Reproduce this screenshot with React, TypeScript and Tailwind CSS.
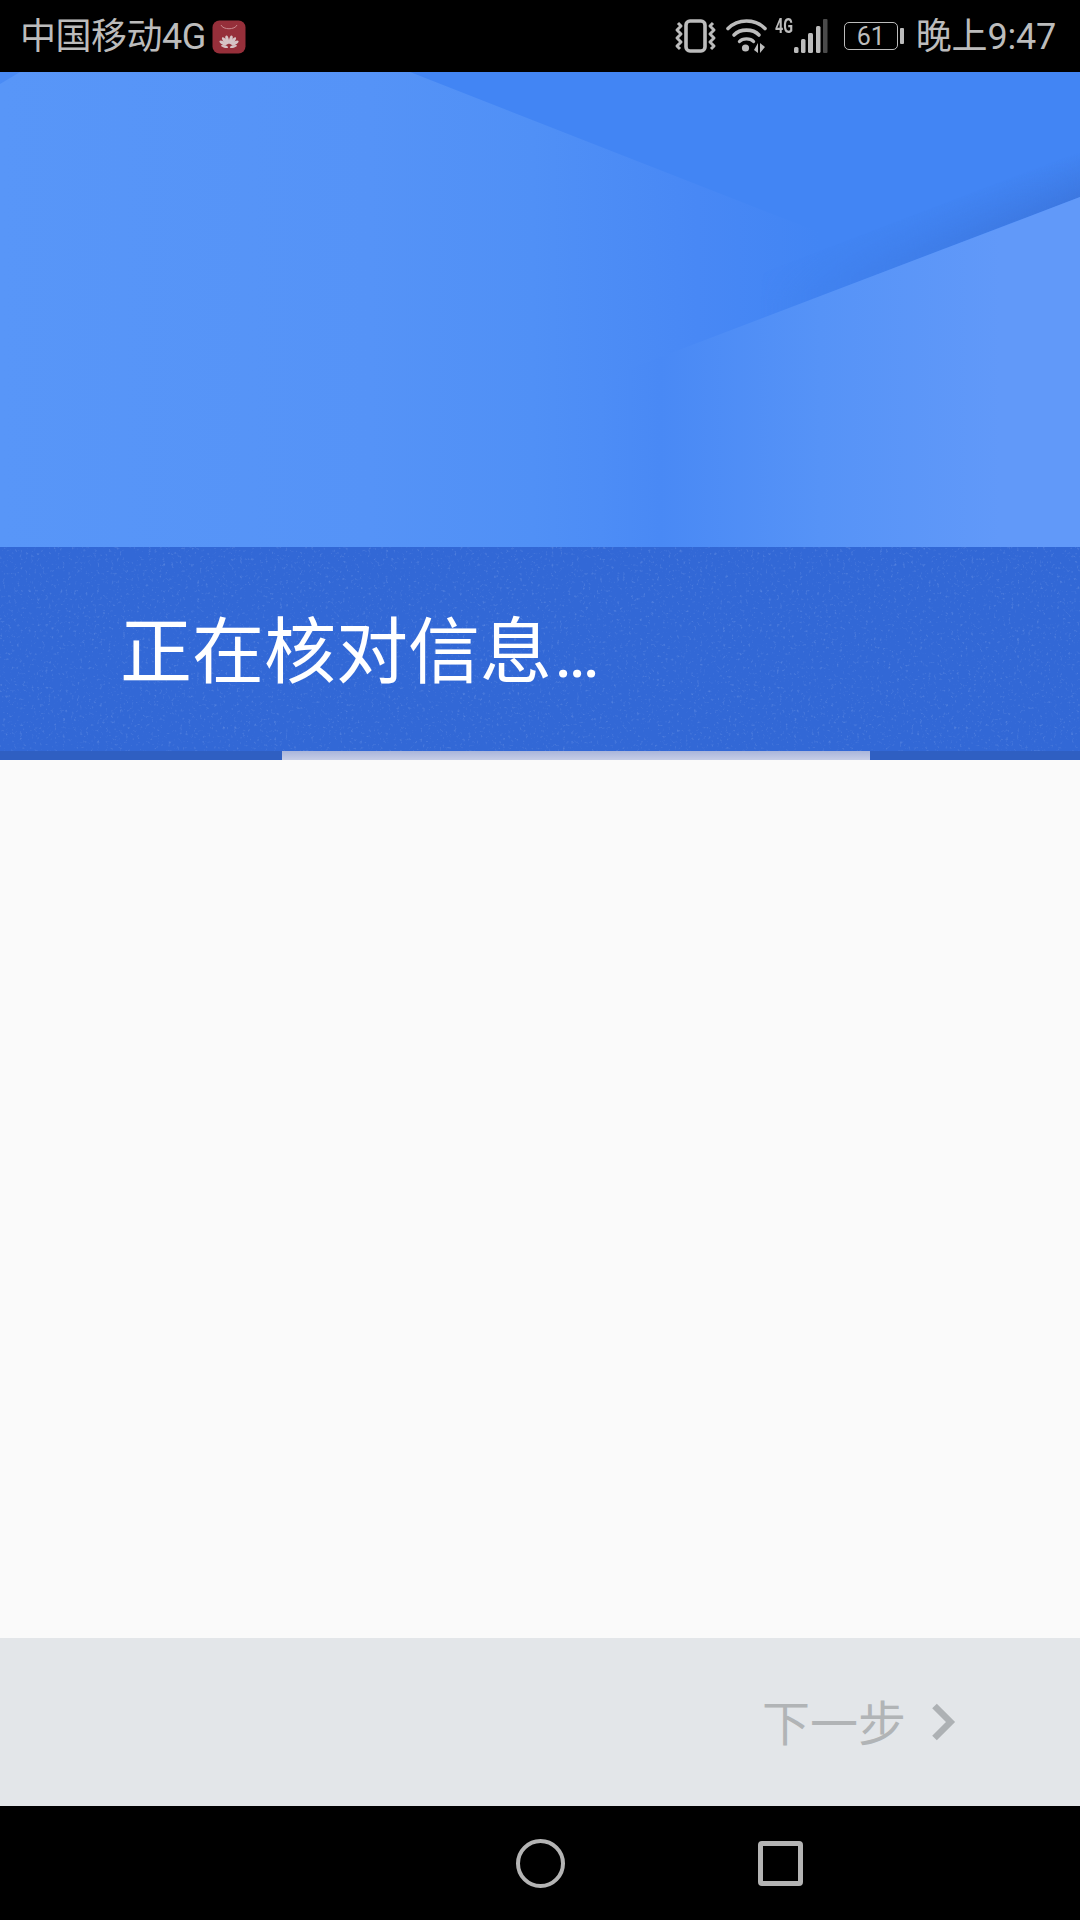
export default function App() {
  const grey = "#bcbcbc";
  return (
    <div className="flex h-[1920px] w-[1080px] flex-col overflow-hidden bg-[#fafafa] font-['Roboto','Noto_Sans_CJK_SC',sans-serif]">
      {/* status bar */}
      <div className="flex h-[72px] shrink-0 items-center bg-black pl-[20px] pr-[24px] text-[#bcbcbc]">
        <span className="relative top-[1px] text-[36px] leading-none font-normal tracking-[-0.5px]">中国移动4G</span>
        <svg className="ml-[6px] mt-[1px]" width="34" height="34" viewBox="0 0 34 34">
          <rect x="0.5" y="0.5" width="33" height="33" rx="7" fill="#962f3a" />
          <path d="M9 5c2 5 14 5 16 0" fill="none" stroke="#c98a90" strokeWidth="1" />
          <g fill="#d6c4c6">
            <ellipse cx="11" cy="23" rx="1.6" ry="4" transform="rotate(-60 11 23)" />
            <ellipse cx="12.8" cy="20.8" rx="1.7" ry="4.2" transform="rotate(-35 12.8 20.8)" />
            <ellipse cx="15.2" cy="19.8" rx="1.7" ry="4.4" transform="rotate(-12 15.2 19.8)" />
            <ellipse cx="18.8" cy="19.8" rx="1.7" ry="4.4" transform="rotate(12 18.8 19.8)" />
            <ellipse cx="21.2" cy="20.8" rx="1.7" ry="4.2" transform="rotate(35 21.2 20.8)" />
            <ellipse cx="23" cy="23" rx="1.6" ry="4" transform="rotate(60 23 23)" />
            <ellipse cx="12.5" cy="26.5" rx="3.6" ry="1.2" transform="rotate(15 12.5 26.5)" />
            <ellipse cx="21.5" cy="26.5" rx="3.6" ry="1.2" transform="rotate(-15 21.5 26.5)" />
          </g>
        </svg>
        <div className="ml-auto flex items-center">
          {/* vibrate */}
          <svg width="43" height="34" viewBox="0 0 43 34" fill="none" stroke={grey}>
            <rect x="12" y="2" width="19" height="30" rx="4" strokeWidth="3.6" />
            <path d="M4 4l3 3-4 4 4 4-4 4 4 4-4 4 3 3" strokeWidth="3" strokeLinejoin="round" />
            <path d="M39 4l-3 3 4 4-4 4 4 4-4 4 4 4-3 3" strokeWidth="3" strokeLinejoin="round" />
          </svg>
          {/* wifi */}
          <svg className="ml-[9px]" width="41" height="34" viewBox="0 0 41 34" fill="none" stroke={grey} strokeLinecap="round">
            <path d="M2 9.5C12-.5 29-.5 39 9.5" strokeWidth="3.6" />
            <path d="M8 16C14 9.5 27 9.5 33 16" strokeWidth="3.6" />
            <path d="M13.5 22.5C16.5 19 24.5 19 27.5 22.5" strokeWidth="3.4" />
            <circle cx="19.5" cy="29" r="3.6" fill={grey} stroke="none" />
            <path d="M28 31l4-7v10zM34 24v10l5-6z" fill={grey} stroke="none" />
          </svg>
          {/* signal */}
          <div className="relative ml-[8px] h-[34px] w-[53px]">
            <span className="absolute left-0 top-[-3px] origin-left scale-x-[0.72] text-[20px] leading-[20px] font-bold">4G</span>
            <svg className="absolute inset-0" width="53" height="34" viewBox="0 0 53 34">
              <rect x="19" y="28" width="4.5" height="6" rx="1.5" fill={grey} />
              <rect x="26" y="20" width="4.5" height="14" rx="1.5" fill={grey} />
              <rect x="33" y="14" width="5" height="20" rx="1.5" fill={grey} />
              <rect x="41" y="7" width="4.5" height="27" rx="1.5" fill={grey} />
              <rect x="48" y="0" width="4.5" height="34" rx="1" fill="#4a4a4a" />
            </svg>
          </div>
          {/* battery */}
          <div className="ml-[16px] flex items-center">
            <div className="flex h-[28px] w-[54px] items-center justify-center rounded-[5px] border-[1.5px] border-[#bcbcbc] text-[25px] leading-none font-normal">61</div>
            <div className="ml-[2px] h-[16px] w-[4px] rounded-[1px] bg-[#bcbcbc]" />
          </div>
          <span className="relative top-[1px] ml-[12px] text-[36px] leading-none font-normal tracking-[-0.2px]">晚上9:47</span>
        </div>
      </div>

      {/* header art */}
      <div className="h-[475px] shrink-0 bg-[#4285f4]">
        <svg width="1080" height="475" viewBox="0 0 1080 475" className="block">
          <defs>
            <linearGradient id="leftFill" gradientUnits="userSpaceOnUse" x1="0" y1="0" x2="820" y2="0">
              <stop offset="0" stopColor="#5896f8" />
              <stop offset="0.45" stopColor="#5593f7" />
              <stop offset="0.65" stopColor="#5090f6" />
              <stop offset="0.85" stopColor="#4888f5" />
              <stop offset="1" stopColor="#4285f4" />
            </linearGradient>
            <linearGradient id="rightFill" gradientUnits="userSpaceOnUse" x1="600" y1="0" x2="1000" y2="0">
              <stop offset="0" stopColor="#4d8df6" />
              <stop offset="0.15" stopColor="#4989f5" />
              <stop offset="0.55" stopColor="#5693f7" />
              <stop offset="1" stopColor="#6199f9" />
            </linearGradient>
            <linearGradient id="edgeShade" gradientUnits="userSpaceOnUse" x1="1080" y1="125" x2="1066" y2="85">
              <stop offset="0" stopColor="#3a72d8" stopOpacity="0.7" />
              <stop offset="1" stopColor="#3a72d8" stopOpacity="0" />
            </linearGradient>
            <linearGradient id="edgeFade" gradientUnits="userSpaceOnUse" x1="1080" y1="0" x2="760" y2="0">
              <stop offset="0" stopColor="white" />
              <stop offset="1" stopColor="black" />
            </linearGradient>
            <mask id="edgeMask" maskUnits="userSpaceOnUse" x="0" y="0" width="1080" height="475">
              <rect width="1080" height="475" fill="url(#edgeFade)" />
            </mask>
          </defs>
          <rect width="1080" height="475" fill="#4285f4" />
          <polygon points="0,0 410,0 780,145 820,160 820,475 0,475" fill="url(#leftFill)" />
          <polygon points="0,0 20,0 0,12" fill="#4a8bf5" />
          <g mask="url(#edgeMask)">
            <polygon points="1132,105 740,255 726,215 1118,65" fill="url(#edgeShade)" />
          </g>
          <polygon points="1080,125 600,308 600,475 1080,475" fill="url(#rightFill)" />
        </svg>
      </div>

      {/* title band */}
      <div className="relative flex h-[204px] shrink-0 items-center bg-[#3268d6] pl-[120px]">
        <svg className="absolute inset-0" width="1080" height="204">
          <filter id="speck">
            <feTurbulence type="fractalNoise" baseFrequency="0.35" numOctaves="2" seed="4" />
            <feColorMatrix values="0 0 0 0 0.55  0 0 0 0 0.68  0 0 0 0 0.95  0 0 0 2.4 -1.45" />
          </filter>
          <rect width="1080" height="204" filter="url(#speck)" opacity="0.3" />
        </svg>
        <h1 className="relative top-[4px] text-[72px] leading-none font-normal text-white">
          正在核对信息<span className="ml-[2px] tracking-[-5px]">...</span>
        </h1>
      </div>

      {/* progress strip */}
      <div className="h-[9px] shrink-0 bg-[#2f5fc2]">
        <div className="ml-[282px] h-full w-[588px] bg-gradient-to-b from-[#a9b5da] to-[#c6cde7]" />
      </div>

      {/* empty body */}
      <div className="flex-1 bg-[#fafafa]" />

      {/* footer */}
      <div className="flex h-[168px] shrink-0 items-center justify-end bg-[#e3e6e9] pr-[124px]">
        <span className="relative top-[3px] text-[48px] leading-none font-normal text-[#b1b4b6]">下一步</span>
        <svg className="ml-[26px]" width="24" height="38" viewBox="0 0 24 38" fill="none" stroke="#adb1b4" strokeWidth="6.5">
          <path d="M2.5 3l16 16-16 16" />
        </svg>
      </div>

      {/* navigation bar */}
      <div className="relative flex h-[114px] shrink-0 items-center bg-black pl-[516px]">
        <div className="h-[49px] w-[49px] rounded-full border-[4px] border-[#b4b4b4]" />
        <div className="ml-[193px] h-[45px] w-[45px] rounded-[4px] border-[5px] border-[#b4b4b4]" />
      </div>
    </div>
  );
}
